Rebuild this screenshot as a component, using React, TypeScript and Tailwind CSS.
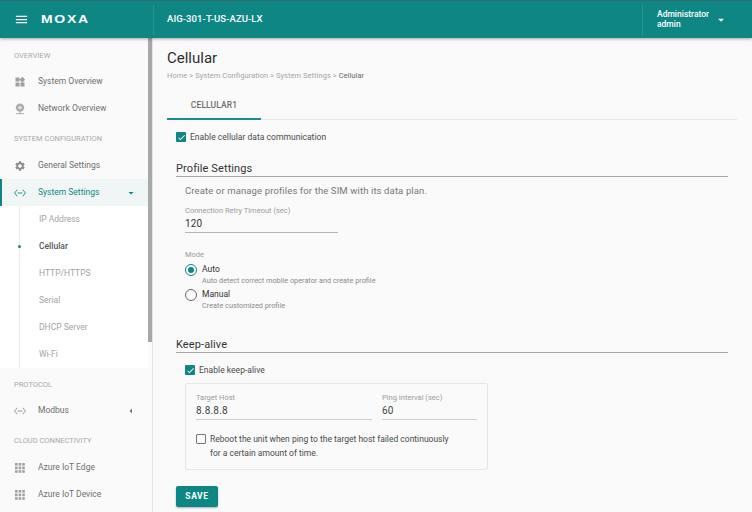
import React from "react";
import { MdWidgets, MdSettings, MdArrowDropDown, MdArrowLeft, MdCheck, MdMenu } from "react-icons/md";

const Label = ({ children }: { children: React.ReactNode }) => (
  <p className="h-[11px] text-[7.5px] leading-[11px] text-[#9b9b9b]">{children}</p>
);

const SectionLabel = ({ children, className }: { children: string; className: string }) => (
  <p className={`pl-[14px] text-[7.5px] leading-[10px] text-[#a8a8a8] ${className}`}>{children}</p>
);

const CodeIcon = ({ color }: { color: string }) => (
  <svg width="12" height="8" viewBox="0 0 12 8" fill="none" stroke={color} strokeWidth="0.9">
    <path d="M3.2 0.8 L0.6 4 L3.2 7.2" />
    <path d="M8.8 0.8 L11.4 4 L8.8 7.2" />
    <path d="M3.6 4 H8.4" />
  </svg>
);

const GlobeIcon = () => (
  <svg width="12" height="12" viewBox="0 0 12 12" fill="#adadad">
    <circle cx="6" cy="4.6" r="4.2" />
    <circle cx="6" cy="4.6" r="1.7" fill="#e6e6e6" />
    <rect x="5.4" y="8.6" width="1.2" height="1.6" />
    <rect x="2" y="10.2" width="8" height="1" />
  </svg>
);

const GridIcon = () => (
  <svg width="10" height="10" viewBox="0 0 10 10" fill="#a0a0a0">
    {[0, 3.6, 7.2].map((y) =>
      [0, 3.6, 7.2].map((x) => <rect key={`${x}-${y}`} x={x} y={y} width="2.6" height="2.6" />),
    )}
  </svg>
);

const NavRow = ({
  icon,
  label,
  active,
  arrow,
}: {
  icon: React.ReactNode;
  label: string;
  active?: boolean;
  arrow?: React.ReactNode;
}) => (
  <div
    className={`relative flex h-[27px] items-center ${active ? "bg-[#f0f5f5] text-[#0e8784]" : "text-[#6f6f6f]"}`}
  >
    {active && <span className="absolute left-0 top-0 h-full w-[2px] bg-[#0e8784]" />}
    <span className="flex w-[38px] shrink-0 justify-center pl-[2px]">{icon}</span>
    <span className="text-[8.5px]">{label}</span>
    {arrow && <span className="absolute right-[11px] flex items-center">{arrow}</span>}
  </div>
);

const SubRow = ({ label, current }: { label: string; current?: boolean }) => (
  <div className="relative flex h-[27px] items-center pl-[19px]">
    {current && <span className="absolute left-[-2px] h-[3px] w-[3px] rounded-full bg-[#0e8784]" />}
    <span className={`text-[8.5px] ${current ? "font-medium text-[#555]" : "text-[#a3a3a3]"}`}>{label}</span>
  </div>
);

const Checkbox = ({ checked }: { checked?: boolean }) =>
  checked ? (
    <span className="flex h-[10px] w-[10px] shrink-0 items-center justify-center rounded-[1px] bg-[#0e8784] text-white">
      <MdCheck size={9} />
    </span>
  ) : (
    <span className="block h-[10px] w-[10px] shrink-0 rounded-[1px] border border-[#777]" />
  );

const Heading = ({ children, className }: { children: string; className: string }) => (
  <div className={`border-b border-[#a9a9a9] ${className}`}>
    <h2 className="text-[11px] leading-[14px] tracking-[0.1px] text-[#333]">{children}</h2>
  </div>
);

export default function App() {
  return (
    <div className="flex h-[512px] w-[752px] flex-col overflow-hidden bg-[#fafafa] font-['Roboto',sans-serif]">
      <header className="relative z-10 flex h-[38px] shrink-0 items-center border-t border-[#2f6b70] bg-[#0e8784] text-white shadow-[0_1px_3px_rgba(0,0,0,0.35)]">
        <span className="flex w-[41px] justify-center pl-[1px]">
          <MdMenu size={15} />
        </span>
        <span className="w-[112px] origin-left scale-x-[1.4] pt-[1px] font-['Liberation_Sans',sans-serif] text-[10px] font-bold leading-none tracking-[1.2px]">
          MOXA
        </span>
        <div className="h-[30px] border-l border-[#2a9491]" />
        <span className="ml-[13px] text-[9.5px] font-medium tracking-[0.1px]">AIG-301-T-US-AZU-LX</span>
        <div className="ml-auto flex h-[30px] items-center border-l border-[#2a9491] pl-[14px]">
          <div className="w-[57px] text-[8.5px] font-medium leading-[9.5px]">
            <p>Administrator</p>
            <p>admin</p>
          </div>
          <span className="mr-[24px] flex w-[14px] justify-center">
            <MdArrowDropDown size={14} />
          </span>
        </div>
      </header>

      <div className="flex min-h-0 flex-1">
        <aside className="relative h-full w-[153px] shrink-0 border-r border-[#e4e4e4] bg-[#fafafa]">
          <span className="absolute right-0 top-0 h-[304px] w-[4px] bg-[#a8a8a8]" />
          <div className="w-[148px]">
            <SectionLabel className="mt-[13px] mb-[7px]">OVERVIEW</SectionLabel>
            <NavRow icon={<MdWidgets size={12} className="text-[#a0a0a0]" />} label="System Overview" />
            <NavRow icon={<GlobeIcon />} label="Network Overview" />
            <SectionLabel className="mt-[12px] mb-[8px]">SYSTEM CONFIGURATION</SectionLabel>
            <NavRow icon={<MdSettings size={12} className="text-[#8d8d8d]" />} label="General Settings" />
            <NavRow
              active
              icon={<CodeIcon color="#0e8784" />}
              label="System Settings"
              arrow={<MdArrowDropDown size={12} className="text-[#0e8784]" />}
            />
            <div className="bg-white pl-[19px]">
              <div className="border-l border-[#ececec]">
                <SubRow label="IP Address" />
                <SubRow label="Cellular" current />
                <SubRow label="HTTP/HTTPS" />
                <SubRow label="Serial" />
                <SubRow label="DHCP Server" />
                <SubRow label="Wi-Fi" />
              </div>
            </div>
            <SectionLabel className="mt-[12px] mb-[7px]">PROTOCOL</SectionLabel>
            <NavRow
              icon={<CodeIcon color="#8d8d8d" />}
              label="Modbus"
              arrow={<MdArrowLeft size={12} className="text-[#777]" />}
            />
            <SectionLabel className="mt-[12px] mb-[8px]">CLOUD CONNECTIVITY</SectionLabel>
            <NavRow icon={<GridIcon />} label="Azure IoT Edge" />
            <NavRow icon={<GridIcon />} label="Azure IoT Device" />
          </div>
        </aside>

        <main className="min-w-0 flex-1 pl-[14px] pr-[24px]">
          <h1 className="mt-[10px] text-[15px] leading-[20px] text-[#2e2e2e]">Cellular</h1>
          <p className="mt-[3px] text-[7.5px] leading-[10px] tracking-[0.05px] text-[#a5a5a5]">
            Home &gt; System Configuration &gt; System Settings &gt; <span className="text-[#666]">Cellular</span>
          </p>
          <div className="mt-[9px] mr-[-9px] border-b border-[#e6e6e6]">
            <div className="mb-[-1px] flex h-[30px] w-[94px] items-center justify-center border-b-[2px] border-[#1d8a8c] pt-[2px] text-[8.5px] font-medium tracking-[0.1px] text-[#6e6e6e]">
              CELLULAR1
            </div>
          </div>

          <div className="ml-[9px]">
            <label className="mt-[11px] flex h-[12px] items-center gap-[4px] text-[8.5px] tracking-[0.03px] text-[#4a4a4a]">
              <Checkbox checked />
              Enable cellular data communication
            </label>
            <Heading className="mt-[19px]">Profile Settings</Heading>

            <div className="pl-[9px]">
              <p className="mt-[8px] text-[9.5px] leading-[12px] tracking-[0.12px] text-[#777]">
                Create or manage profiles for the SIM with its data plan.
              </p>
              <div className="mt-[8px] w-[153px] border-b border-[#b5b5b5] pb-[2px]">
                <Label>Connection Retry Timeout (sec)</Label>
                <p className="mt-[2px] text-[10px] leading-[12px] tracking-[0.1px] text-[#333]">120</p>
              </div>

              <div className="mt-[16px]">
                <Label>Mode</Label>
                <div className="mt-[3px] flex h-[22px] items-start gap-[5px]">
                  <span className="mt-[1px] flex h-[12px] w-[12px] items-center justify-center rounded-full border-[1.5px] border-[#0e8784]">
                    <span className="h-[6px] w-[6px] rounded-full bg-[#0e8784]" />
                  </span>
                  <div>
                    <p className="text-[8.5px] leading-[13px] text-[#333]">Auto</p>
                    <p className="text-[7.3px] leading-[9px] text-[#8a8a8a]">
                      Auto detect correct mobile operator and create profile
                    </p>
                  </div>
                </div>
                <div className="mt-[3px] flex h-[22px] items-start gap-[5px]">
                  <span className="mt-[1px] h-[12px] w-[12px] rounded-full border border-[#666]" />
                  <div>
                    <p className="text-[8.5px] leading-[13px] text-[#333]">Manual</p>
                    <p className="text-[7.3px] leading-[9px] text-[#8a8a8a]">Create customized profile</p>
                  </div>
                </div>
              </div>
            </div>

            <Heading className="mt-[28px]">Keep-alive</Heading>

            <div className="pl-[9px]">
              <label className="mt-[11px] flex h-[12px] items-center gap-[4px] text-[8.5px] tracking-[0.03px] text-[#4a4a4a]">
                <Checkbox checked />
                Enable keep-alive
              </label>
              <div className="mt-[7px] h-[87px] w-[303px] rounded-[2px] border border-[#e6e6e6] px-[10px] pt-[8px]">
                <div className="flex gap-[10px]">
                  <div className="w-[176px] border-b-[1.5px] border-[#cfcfcf] pb-[2px]">
                    <Label>Target Host</Label>
                    <p className="mt-[2px] text-[10px] leading-[12px] tracking-[0.2px] text-[#444]">8.8.8.8</p>
                  </div>
                  <div className="w-[95px] border-b-[1.5px] border-[#cfcfcf] pb-[2px]">
                    <Label>Ping Interval (sec)</Label>
                    <p className="mt-[2px] text-[10px] leading-[12px] tracking-[0.2px] text-[#444]">60</p>
                  </div>
                </div>
                <div className="mt-[12px] flex gap-[4px] text-[8.5px] leading-[14px] text-[#4a4a4a]">
                  <span className="mt-[2px] block">
                    <Checkbox />
                  </span>
                  <p>
                    Reboot the unit when ping to the target host failed continuously
                    <br />
                    for a certain amount of time.
                  </p>
                </div>
              </div>
            </div>

            <button className="mt-[16px] flex h-[21px] w-[42px] items-center justify-center rounded-[2px] bg-[#0e8784] text-[8.5px] font-bold tracking-[0.6px] text-white shadow-[0_1px_2px_rgba(0,0,0,0.3)]">
              SAVE
            </button>
          </div>
        </main>
      </div>
    </div>
  );
}
